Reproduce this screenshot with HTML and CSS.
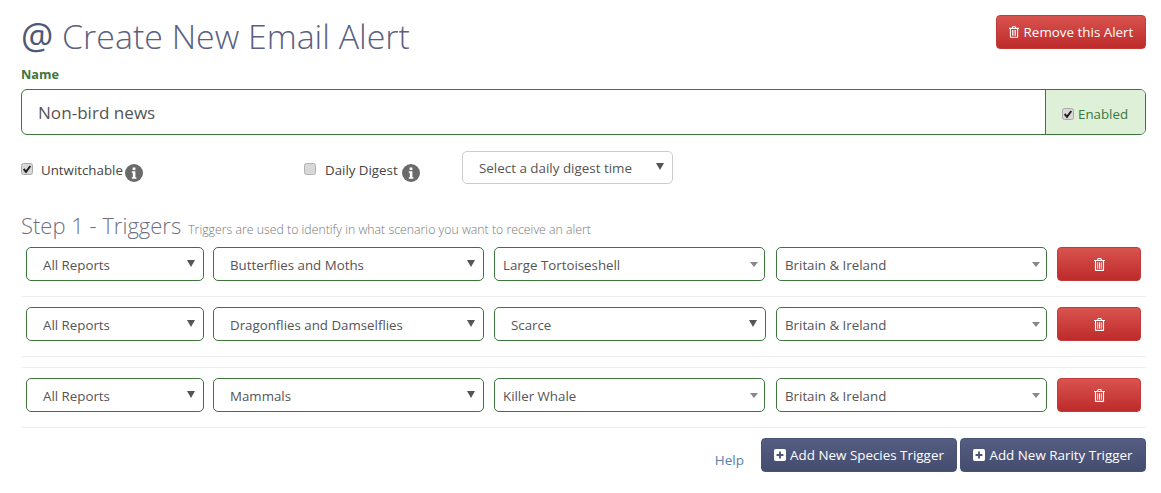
FILE: index.html
```html
<!DOCTYPE html>
<html lang="en">
<head>
<meta charset="utf-8">
<title>Create New Email Alert</title>
<link rel="stylesheet" href="styles.css">
</head>
<body>
<svg class="sprites" width="0" height="0" aria-hidden="true">
  <symbol id="trash" viewBox="0 0 12 14">
    <path fill="currentColor" fill-rule="evenodd" d="M4.2 0h3.6l.9 2H12v1.3h-1V13a1 1 0 0 1-1 1H2a1 1 0 0 1-1-1V3.3H0V2h3.3zM5 1.1l-.4.9h2.8L7 1.1zM2.3 3.3v9.4h7.4V3.3zM3.6 4.6h1v6.9h-1zm1.9 0h1v6.9h-1zm1.9 0h1v6.9h-1z"/>
  </symbol>
  <symbol id="plus" viewBox="0 0 14 14">
    <path fill="currentColor" fill-rule="evenodd" d="M2 0h10a2 2 0 0 1 2 2v10a2 2 0 0 1-2 2H2a2 2 0 0 1-2-2V2a2 2 0 0 1 2-2zm3.9 3v2.9H3v2.2h2.9V11h2.2V8.100H11V5.900H8.100V3z"/>
  </symbol>
  <symbol id="info" viewBox="0 0 18 18">
    <circle cx="9" cy="9" r="9" fill="#6a6a6a"/>
    <rect x="7.600" y="3.500" width="2.800" height="2.600" fill="#fff"/>
    <path fill="#fff" d="M6.800 7.300h3.600v6h1v1.500H6.800v-1.500h1v-4.500h-1z"/>
  </symbol>
  <symbol id="tick" viewBox="0 0 12 12">
    <rect x=".5" y=".5" width="11" height="11" rx="2" fill="#d8d8d8" stroke="#a8a8a8"/>
    <path fill="none" stroke="#222" stroke-width="2" d="M2.700 6l2.300 2.800L9.300 3"/>
  </symbol>
  <symbol id="box" viewBox="0 0 12 12">
    <rect x=".5" y=".5" width="11" height="11" rx="2" fill="#d8d8d8" stroke="#b0b0b0"/>
  </symbol>
</svg>
<main class="page">
  <header class="head">
    <h1 class="title"><span class="at">@</span> Create New Email Alert</h1>
    <a class="btn btn-red btn-remove"><svg class="i-trash-s"><use href="#trash"/></svg>Remove this Alert</a>
  </header>

  <label class="name-label">Name</label>
  <div class="name-group">
    <div class="name-input">Non-bird news</div>
    <div class="name-addon"><svg class="cb"><use href="#tick"/></svg>Enabled</div>
  </div>

  <div class="options">
    <div class="opt opt-a"><svg class="cb"><use href="#tick"/></svg><span class="opt-text">Untwitchable</span><svg class="info"><use href="#info"/></svg></div>
    <div class="opt opt-b"><svg class="cb"><use href="#box"/></svg><span class="opt-text">Daily Digest</span><svg class="info"><use href="#info"/></svg></div>
    <div class="select select-plain"><span>Select a daily digest time</span><i class="arrow"></i></div>
  </div>

  <h2 class="step">Step 1 - Triggers <small>Triggers are used to identify in what scenario you want to receive an alert</small></h2>

  <div class="row">
    <div class="select s1"><span>All Reports</span><i class="arrow"></i></div>
    <div class="select s2"><span>Butterflies and Moths</span><i class="arrow"></i></div>
    <div class="select s3"><span>Large Tortoiseshell</span><i class="arrow arrow-grey"></i></div>
    <div class="select s4"><span>Britain &amp; Ireland</span><i class="arrow arrow-grey"></i></div>
    <a class="btn btn-red btn-del"><svg class="i-trash"><use href="#trash"/></svg></a>
  </div>
  <div class="row">
    <div class="select s1"><span>All Reports</span><i class="arrow"></i></div>
    <div class="select s2"><span>Dragonflies and Damselflies</span><i class="arrow"></i></div>
    <div class="select s3-rarity"><span>Scarce</span><i class="arrow"></i></div>
    <div class="select s4"><span>Britain &amp; Ireland</span><i class="arrow arrow-grey"></i></div>
    <a class="btn btn-red btn-del"><svg class="i-trash"><use href="#trash"/></svg></a>
  </div>
  <div class="divider"></div>
  <div class="row">
    <div class="select s1"><span>All Reports</span><i class="arrow"></i></div>
    <div class="select s2"><span>Mammals</span><i class="arrow"></i></div>
    <div class="select s3"><span>Killer Whale</span><i class="arrow arrow-grey"></i></div>
    <div class="select s4"><span>Britain &amp; Ireland</span><i class="arrow arrow-grey"></i></div>
    <a class="btn btn-red btn-del"><svg class="i-trash"><use href="#trash"/></svg></a>
  </div>

  <footer class="foot">
    <a class="help">Help</a>
    <a class="btn btn-navy btn-species"><svg class="i-plus"><use href="#plus"/></svg>Add New Species Trigger</a>
    <a class="btn btn-navy btn-rarity"><svg class="i-plus"><use href="#plus"/></svg>Add New Rarity Trigger</a>
  </footer>
</main>
</body>
</html>
```
FILE: styles.css
```css
* { box-sizing: border-box; }
html, body { margin: 0; padding: 0; background: #fff; }
body { font-family: "Open Sans", "Noto Sans", sans-serif; font-size: 13.300px; color: #555; }
.sprites { position: absolute; }
.page { width: 1146px; padding-left: 21px; }

.head { display: flex; justify-content: space-between; align-items: flex-start; height: 64px; padding-top: 15px; }
.title { margin: -1px 0 0; font-size: 33.900px; font-weight: 300; line-height: 44px; color: #5b6080; }
.at { font-weight: 500; font-size: 36px; color: #4f5877; }

.btn { display: flex; align-items: center; justify-content: center; height: 34px; border-radius: 4px; color: #fff; font-size: 13.400px; white-space: nowrap; }
.btn-red { background: linear-gradient(#d9534f, #bd2b2b); border: 1px solid #c43a38; }
.btn-remove { width: 150px; }
.btn-del { width: 84px; }
.btn-navy { background: linear-gradient(#555e82, #444d6e); border: 1px solid #4a5374; }
.btn-species { width: 196px; }
.btn-rarity { width: 186px; }
.i-trash-s { width: 10px; height: 12px; margin-right: 5px; }
.i-trash { width: 11px; height: 13px; }
.i-plus { width: 12px; height: 12px; margin-right: 4px; }

.name-label { display: block; height: 25px; font-weight: 700; font-size: 12.700px; line-height: 21px; color: #3c763d; }
.name-group { display: flex; height: 46px; border: 1px solid #3c763d; border-radius: 6px; }
.name-input { flex: 1; padding-left: 16px; font-size: 17.100px; line-height: 46px; color: #555; }
.name-addon { display: flex; align-items: center; gap: 4px; width: 100px; padding: 3px 0 0 16px; border-left: 1px solid #3c763d; border-radius: 0 5px 5px 0; background: #dff0d8; color: #3c763d; }

.cb { width: 12px; height: 12px; flex: none; }
.options { display: flex; align-items: flex-start; height: 77px; padding-top: 16px; }
.opt { display: flex; align-items: center; height: 38px; color: #444; }
.opt-a { width: 283px; }
.opt-b { width: 158px; }
.opt-text { margin-left: 8px; margin-right: 2px; }
.opt-b .opt-text { margin-left: 9px; margin-right: 4px; }
.opt .cb { margin-top: -2px; }
.info { width: 18px; height: 18px; margin-top: 5px; }

.select { display: flex; align-items: center; justify-content: space-between; height: 34px; padding: 1px 8.500px 0 16px; background: #fff; border: 1px solid #3c763d; border-radius: 5px; font-size: 13.300px; color: #555; }
.select-plain { width: 211px; height: 33px; padding-top: 0; border-color: #ccc; font-size: 13.400px; }
.arrow { width: 0; height: 0; border-left: 4px solid transparent; border-right: 4px solid transparent; border-top: 7px solid #555; margin-top: -2px; }
.arrow-grey { border-top-color: #888; border-top-width: 5px; margin: 0 -2.500px 0 0; }

.step { display: flex; align-items: baseline; gap: 7px; margin: -1px 0 0; height: 36px; font-size: 22px; line-height: 28px; font-weight: 300; color: #6f6f80; }
.step small { font-size: 12.320px; color: #777; font-weight: 300; }

.row { display: grid; grid-template-columns: 187px 281px 282px 281px 84px; height: 50px; padding-left: 5px; align-items: start; border-bottom: 1px solid #eee; margin-bottom: 10px; }
.s1 { width: 178px; }
.s2 { width: 271px; }
.s3 { width: 271px; padding-left: 8px; }
.s3-rarity { width: 272px; }
.s4 { width: 271px; padding-left: 8px; }
.divider { height: 1px; margin-bottom: 10px; background: #eee; }

.foot { display: flex; justify-content: flex-end; align-items: center; gap: 3px; }
.help { margin-right: 14px; margin-top: 10px; color: #5b7ea8; font-size: 13.500px; }
```
